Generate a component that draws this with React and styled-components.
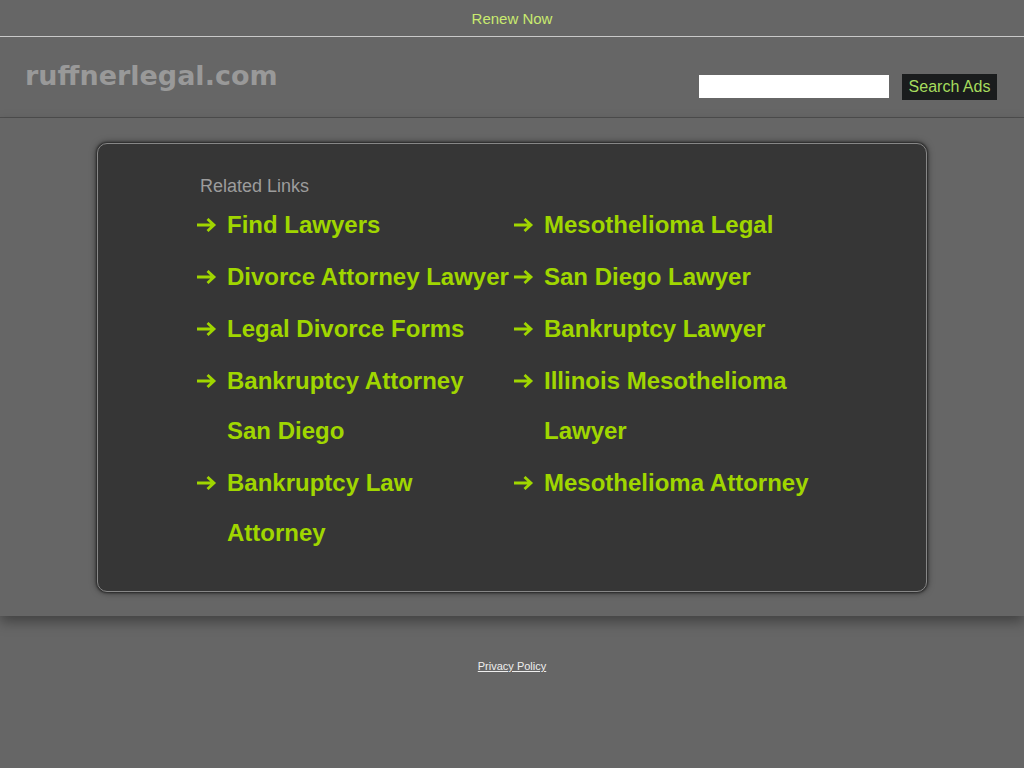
import React from 'react';
import styled, { createGlobalStyle } from 'styled-components';

const GlobalStyle = createGlobalStyle`
    html, body {
        margin: 0;
        padding: 0;
        background: #666666;
        font-family: "Liberation Sans", Arial, sans-serif;
    }
`;

const TopBar = styled.div`
    height: 36px;
    border-bottom: 1px solid #c9c9c9;
    display: flex;
    align-items: center;
    justify-content: center;
`;

const RenewLink = styled.a`
    color: #c9ea6f;
    font-size: 15px;
    text-decoration: none;
`;

const Header = styled.div`
    height: 80px;
    border-bottom: 1px solid #4f4f4f;
    display: flex;
    justify-content: space-between;
    padding: 0 27px 0 25px;
`;

const Domain = styled.h1`
    margin: 0;
    padding-top: 21px;
    font-family: "DejaVu Sans", sans-serif;
    font-weight: bold;
    font-size: 27px;
    line-height: 36px;
    color: #999999;
`;

const SearchForm = styled.form`
    display: flex;
    align-items: center;
    gap: 13px;
    padding-top: 37px;
    align-self: flex-start;
`;

const SearchInput = styled.input`
    width: 190px;
    height: 23px;
    box-sizing: border-box;
    border: none;
    background: #ffffff;
    padding: 0 4px;
    margin: 0 0 1px;
`;

const SearchButton = styled.button`
    height: 26px;
    width: 95px;
    box-sizing: border-box;
    border: none;
    background: #1a1c1d;
    color: #a6dc5e;
    font-family: "Liberation Sans", Arial, sans-serif;
    font-size: 16px;
    padding: 0;
    margin: 0;
`;

const Main = styled.div`
    position: relative;
    z-index: 1;
    background: #666666;
    padding: 25px 0 24px;
    box-shadow: 0 6px 12px rgba(0, 0, 0, 0.35);
`;

const LinkBox = styled.div`
    width: 830px;
    box-sizing: border-box;
    margin: 0 auto;
    background: #363636;
    border: 1px solid #878787;
    border-radius: 10px;
    box-shadow: 0 0 2px 1px rgba(0, 0, 0, 0.45), 0 0 7px rgba(0, 0, 0, 0.6);
    padding: 31px 0 33px 100px;
`;

const Heading = styled.div`
    color: #9c9c9c;
    font-size: 18px;
    line-height: 22px;
    margin-bottom: 3px;
    padding-left: 2px;
`;

const LinkList = styled.ul`
    list-style: none;
    margin: 0;
    padding: 0;
    display: grid;
    grid-template-columns: 317px 317px;
    row-gap: 2px;
`;

const LinkItem = styled.li`
    display: flex;
    align-items: flex-start;
`;

const ArrowCell = styled.span`
    width: 29px;
    height: 50px;
    flex: none;
    display: flex;
    align-items: center;
    margin-left: -1px;
    margin-right: 1px;
`;

const LinkText = styled.a`
    width: 284px;
    color: #a0d600;
    font-weight: bold;
    font-size: 24px;
    line-height: 50px;
    text-decoration: none;
`;

const Footer = styled.div`
    padding-top: 40px;
    text-align: center;
`;

const PrivacyLink = styled.a`
    color: #eeeeee;
    font-size: 11px;
    text-decoration: underline;
`;

const Arrow = () => (
    <svg width="20" height="14" viewBox="0 0 20 14">
        <path d="M0 7 H17 M10.5 1 L17 7 L10.5 13" fill="none" stroke="#a0d600" strokeWidth="2.8" />
    </svg>
);

const links = [
    'Find Lawyers',
    'Mesothelioma Legal',
    'Divorce Attorney Lawyer',
    'San Diego Lawyer',
    'Legal Divorce Forms',
    'Bankruptcy Lawyer',
    'Bankruptcy Attorney San Diego',
    'Illinois Mesothelioma Lawyer',
    'Bankruptcy Law Attorney',
    'Mesothelioma Attorney',
];

export default function App() {
    return (
        <>
            <GlobalStyle />
            <TopBar>
                <RenewLink href="#">Renew Now</RenewLink>
            </TopBar>
            <Header>
                <Domain>ruffnerlegal.com</Domain>
                <SearchForm onSubmit={e => e.preventDefault()}>
                    <SearchInput type="text" />
                    <SearchButton type="submit">Search Ads</SearchButton>
                </SearchForm>
            </Header>
            <Main>
                <LinkBox>
                    <Heading>Related Links</Heading>
                    <LinkList>
                        {links.map(link => (
                            <LinkItem key={link}>
                                <ArrowCell><Arrow /></ArrowCell>
                                <LinkText href="#">{link}</LinkText>
                            </LinkItem>
                        ))}
                    </LinkList>
                </LinkBox>
            </Main>
            <Footer>
                <PrivacyLink href="#">Privacy Policy</PrivacyLink>
            </Footer>
        </>
    );
}
